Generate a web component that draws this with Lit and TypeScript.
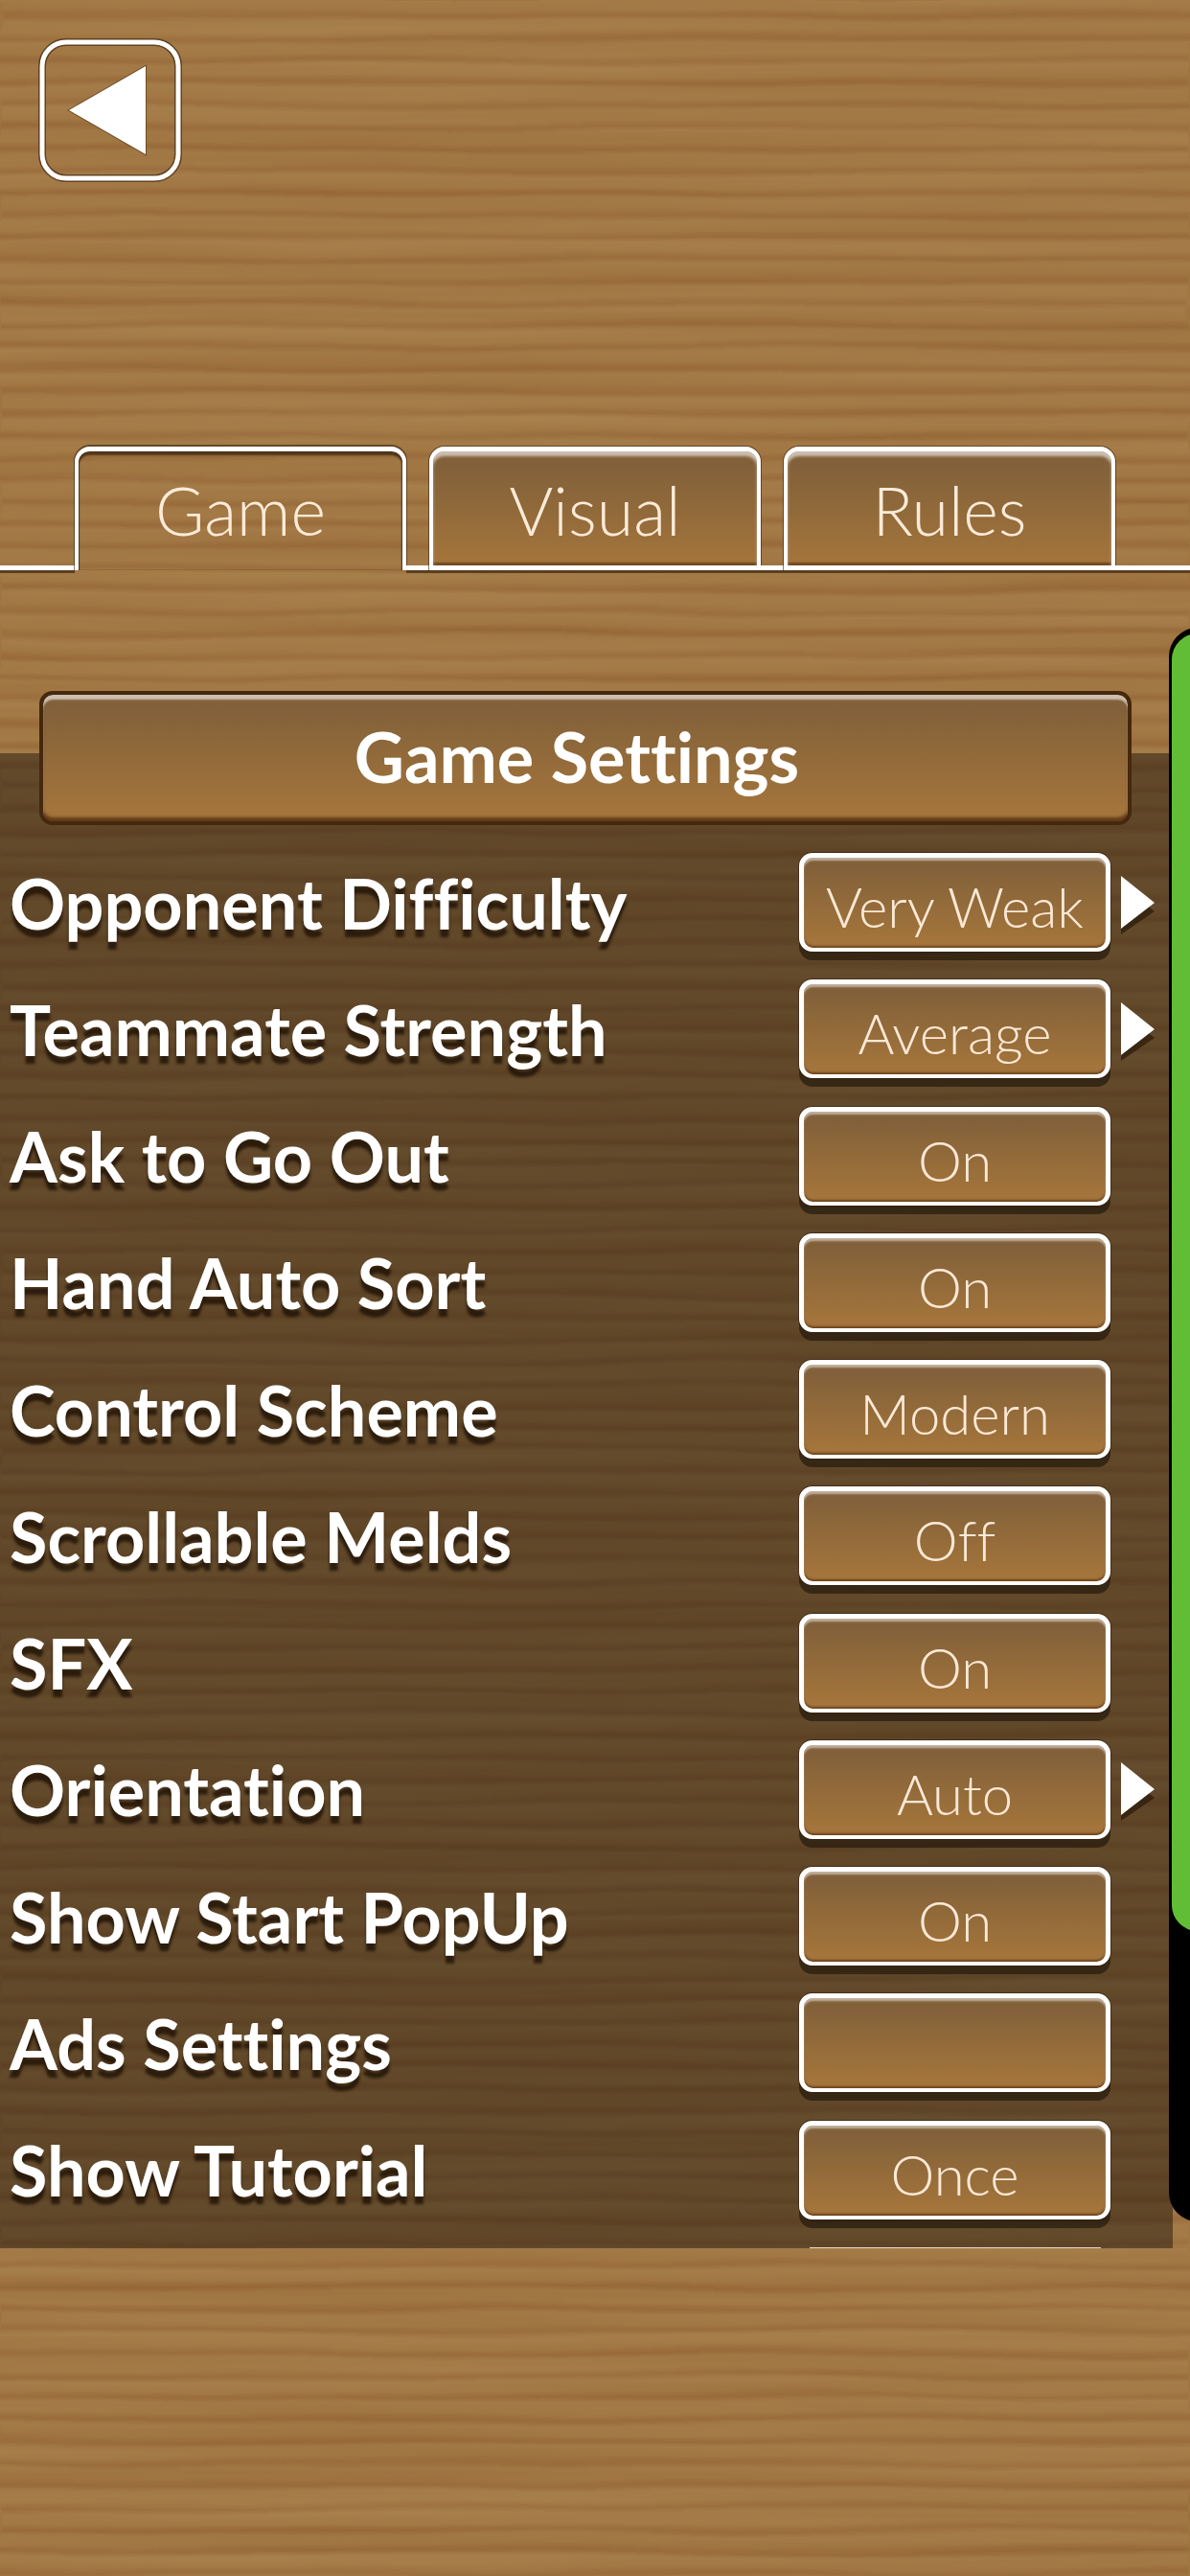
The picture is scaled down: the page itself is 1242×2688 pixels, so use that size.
import { LitElement, html, css, svg, nothing } from "lit";
import { customElement, property, state } from "lit/decorators.js";
import { classMap } from "lit/directives/class-map.js";

interface Setting {
  id: string;
  label: string;
  options: string[];
  selected: number;
  arrow?: boolean;
}

const TABS = ["Game", "Visual", "Rules"];

const SETTINGS: Setting[] = [
  { id: "difficulty", label: "Opponent Difficulty", options: ["Very Weak", "Average", "Strong"], selected: 0, arrow: true },
  { id: "teammate", label: "Teammate Strength", options: ["Very Weak", "Average", "Strong"], selected: 1, arrow: true },
  { id: "ask", label: "Ask to Go Out", options: ["Off", "On"], selected: 1 },
  { id: "sort", label: "Hand Auto Sort", options: ["Off", "On"], selected: 1 },
  { id: "scheme", label: "Control Scheme", options: ["Modern", "Classic"], selected: 0 },
  { id: "melds", label: "Scrollable Melds", options: ["Off", "On"], selected: 0 },
  { id: "sfx", label: "SFX", options: ["Off", "On"], selected: 1 },
  { id: "orientation", label: "Orientation", options: ["Auto", "Portrait"], selected: 0, arrow: true },
  { id: "popup", label: "Show Start PopUp", options: ["Off", "On"], selected: 1 },
  { id: "ads", label: "Ads Settings", options: [""], selected: 0 },
  { id: "tutorial", label: "Show Tutorial", options: ["Once", "Always"], selected: 0 },
];

/* Horizontal wood grain: soft bands bent and tinted by stretched noise. */
@customElement("wood-grain")
export class WoodGrain extends LitElement {
  static styles = css`
    :host {
      position: absolute;
      inset: 0;
      overflow: hidden;
      background: #9f7542;
    }
    .grain {
      display: block;
      width: 100%;
      height: 100%;
    }
  `;

  render() {
    return html`<svg class="grain" aria-hidden="true">
      ${svg`
        <defs>
          <linearGradient id="band" x1="0" y1="0" x2="0" y2="1">
            <stop offset="0" stop-color="#a67f4b" />
            <stop offset="0.45" stop-color="#a47a46" />
            <stop offset="0.75" stop-color="#966737" />
            <stop offset="1" stop-color="#a67f4b" />
          </linearGradient>
          <pattern id="bands" width="100" height="23" patternUnits="userSpaceOnUse">
            <rect width="100" height="23" fill="url(#band)" />
          </pattern>
          <filter id="wood" x="0" y="0" width="100%" height="100%" color-interpolation-filters="sRGB">
            <feTurbulence type="fractalNoise" baseFrequency="0.003 0.02" numOctaves="2" seed="7" result="bend" />
            <feDisplacementMap in="SourceGraphic" in2="bend" scale="14" xChannelSelector="A" yChannelSelector="R" result="bent" />
            <feTurbulence type="fractalNoise" baseFrequency="0.0012 0.04" numOctaves="3" seed="3" />
            <feColorMatrix type="matrix" values="0 0 0 0.12 0.564  0 0 0 0.17 0.374  0 0 0 0.16 0.179  0 0 0 0 1" result="tint" />
            <feComposite in="bent" in2="tint" operator="arithmetic" k1="0" k2="0.6" k3="0.4" k4="0" />
          </filter>
        </defs>
        <rect width="100%" height="100%" fill="url(#bands)" filter="url(#wood)" />
      `}
    </svg>`;
  }
}

@customElement("setting-row")
export class SettingRow extends LitElement {
  @property({ attribute: false }) setting!: Setting;
  @state() private index = -1;

  static styles = css`
    :host {
      display: flex;
      align-items: center;
      height: 103px;
    }
    .label {
      flex: 1;
      padding-left: 10px;
      font-size: 72px;
      font-weight: 700;
      line-height: 104px;
      color: #fff;
      white-space: nowrap;
      text-shadow: 0 8px 3px rgba(30, 18, 6, 0.8);
    }
    .value {
      width: 325px;
      height: 103px;
      padding: 8px 0 0;
      border: 5px solid #fff;
      border-bottom-width: 4px;
      border-radius: 14px;
      background: linear-gradient(#82603a 10%, #8c673a 35%, #a3743b 90%);
      box-shadow:
        0 0 0 1px rgba(50, 32, 14, 0.6),
        0 9px 0 rgba(20, 12, 6, 0.55),
        inset 0 3px 2px rgba(255, 255, 255, 0.5),
        inset 0 -2px 2px rgba(90, 50, 15, 0.7);
      font: 300 58px/80px Lato, "Liberation Sans", sans-serif;
      font-variant-ligatures: none;
      color: #fde9d6;
      white-space: nowrap;
    }
    .slot {
      width: 65px;
      padding-left: 11px;
      box-sizing: border-box;
    }
    .next {
      display: block;
      width: 36px;
      height: 66px;
      padding: 0;
      border: 0;
      background: none;
    }
    .arrow {
      display: block;
      width: 36px;
      height: 66px;
    }
  `;

  private advance() {
    const current = this.index < 0 ? this.setting.selected : this.index;
    this.index = (current + 1) % this.setting.options.length;
  }

  render() {
    const { id, label, options, selected, arrow } = this.setting;
    return html`
      <label class="label" for=${id}>${label}</label>
      <button class="value" id=${id} @click=${this.advance}>${options[this.index < 0 ? selected : this.index]}</button>
      <span class="slot">
        ${arrow
          ? html`<button class="next" aria-label="Next" @click=${this.advance}>
              <svg class="arrow" viewBox="0 0 36 66" aria-hidden="true">
                <path d="M0 14 L35 42 L0 66 Z" fill="#2c1c0c" fill-opacity="0.75" />
                <path d="M0 5 L35 33 L0 60 Z" fill="#fff" />
              </svg>
            </button>`
          : nothing}
      </span>
    `;
  }
}

@customElement("app-root")
export class AppRoot extends LitElement {
  @state() private tab = 0;
  private visiblePercent = 82;

  static styles = css`
    :host {
      position: relative;
      display: flex;
      flex-direction: column;
      min-height: 100vh;
      overflow: hidden;
      isolation: isolate;
      box-sizing: border-box;
      padding-bottom: 342px;
      font-family: Lato, "Liberation Sans", sans-serif;
      font-variant-ligatures: none;
    }
    .wood {
      z-index: -1;
    }
    .top {
      padding: 41px 41px 277px;
    }
    .back {
      display: block;
      width: 148px;
      height: 148px;
      padding: 0;
      border: 0;
      background: none;
    }
    .back-icon {
      display: block;
      width: 148px;
      height: 148px;
      overflow: visible;
    }
    .tabs {
      display: flex;
      height: 129px;
    }
    .rule {
      width: 24px;
      box-sizing: border-box;
      border-bottom: 5px solid #fff;
      box-shadow: 0 3px 0 #5a3f20;
    }
    .rule.edge {
      width: 78px;
    }
    .tab {
      flex: 1;
      padding: 3px 0 0;
      border: 4px solid #fff;
      border-top-width: 5px;
      border-bottom-width: 5px;
      border-radius: 16px 16px 0 0;
      background: linear-gradient(#82603a 10%, #8c673a 40%, #a3743b 95%);
      box-shadow:
        0 3px 0 #5a3f20,
        0 0 0 1px rgba(60, 38, 16, 0.6),
        inset 0 5px 3px rgba(255, 255, 255, 0.6),
        inset 0 -3px 2px rgba(90, 55, 20, 0.7);
      font: 300 70px/116px Lato, "Liberation Sans", sans-serif;
      color: #fdebd9;
    }
    .tab.active {
      padding: 0 0 2px;
      border-bottom: 0;
      background: none;
      box-shadow:
        0 -1px 0 1px rgba(60, 38, 16, 0.6),
        inset 0 4px 2px rgba(60, 38, 16, 0.8),
        inset 1px 0 1px rgba(60, 38, 16, 0.7),
        inset -1px 0 1px rgba(60, 38, 16, 0.7);
    }
    .stage {
      position: relative;
      flex: 1;
      display: flex;
      margin-top: 126px;
    }
    .panel {
      flex: 1;
      display: flex;
      flex-direction: column;
      gap: 29px;
      margin-right: 18px;
      background: linear-gradient(rgba(0, 0, 0, 0.4), rgba(0, 0, 0, 0.4)) 0 65px no-repeat;
    }
    .title {
      margin: 0 43px 0 41px;
      padding: 0 18px 4px 0;
      border: 4px solid #45280d;
      border-radius: 14px;
      background: linear-gradient(#82603a 10%, #8c673a 35%, #a3743b 90%);
      box-shadow:
        inset 0 5px 2px rgba(255, 255, 255, 0.6),
        inset 0 -4px 3px rgba(80, 45, 15, 0.8);
      font-size: 72px;
      font-weight: 700;
      line-height: 128px;
      text-align: center;
      color: #fff;
    }
    .rows {
      flex: 1;
      display: flex;
      flex-direction: column;
      justify-content: space-between;
      margin: 0;
      padding: 0;
      list-style: none;
    }
    .peek {
      align-self: flex-end;
      width: 304px;
      height: 1px;
      margin-right: 75px;
      background: #e8ddd0;
    }
    .rail {
      position: absolute;
      top: -66px;
      right: 0;
      bottom: 28px;
      width: 22px;
      overflow: hidden;
    }
    .track {
      width: 60px;
      height: 100%;
      box-sizing: border-box;
      padding: 6px 3px;
      border-radius: 30px;
      background: #000;
    }
    .thumb {
      border-radius: 27px;
      background: #61bd35;
    }
  `;

  render() {
    return html`
      <wood-grain class="wood"></wood-grain>
      <header class="top">
        <button class="back" aria-label="Back">
          <svg class="back-icon" viewBox="0 0 148 148" aria-hidden="true">
            <rect x="3" y="3" width="142" height="142" rx="25" fill="none" stroke="#4c3218" stroke-opacity="0.75" stroke-width="8" />
            <rect x="3" y="3" width="142" height="142" rx="25" fill="none" stroke="#fff" stroke-width="5" />
            <path d="M31 74 L111 28 V120 Z" fill="#fff" stroke="#4c3218" stroke-opacity="0.6" stroke-width="2" paint-order="stroke" />
          </svg>
        </button>
      </header>
      <nav class="tabs">
        <span class="rule edge"></span>
        ${TABS.map(
          (name, i) => html`
            ${i > 0 ? html`<span class="rule"></span>` : nothing}
            <button class=${classMap({ tab: true, active: i === this.tab })} @click=${() => (this.tab = i)}>${name}</button>
          `,
        )}
        <span class="rule edge"></span>
      </nav>
      <main class="stage">
        <section class="panel">
          <h1 class="title">Game Settings</h1>
          <ul class="rows">
            ${SETTINGS.map((s) => html`<li><setting-row .setting=${s}></setting-row></li>`)}
            <li class="peek" aria-hidden="true"></li>
          </ul>
        </section>
        <div class="rail">
          <div class="track">
            <div class="thumb" style="height: ${this.visiblePercent}%"></div>
          </div>
        </div>
      </main>
    `;
  }
}
